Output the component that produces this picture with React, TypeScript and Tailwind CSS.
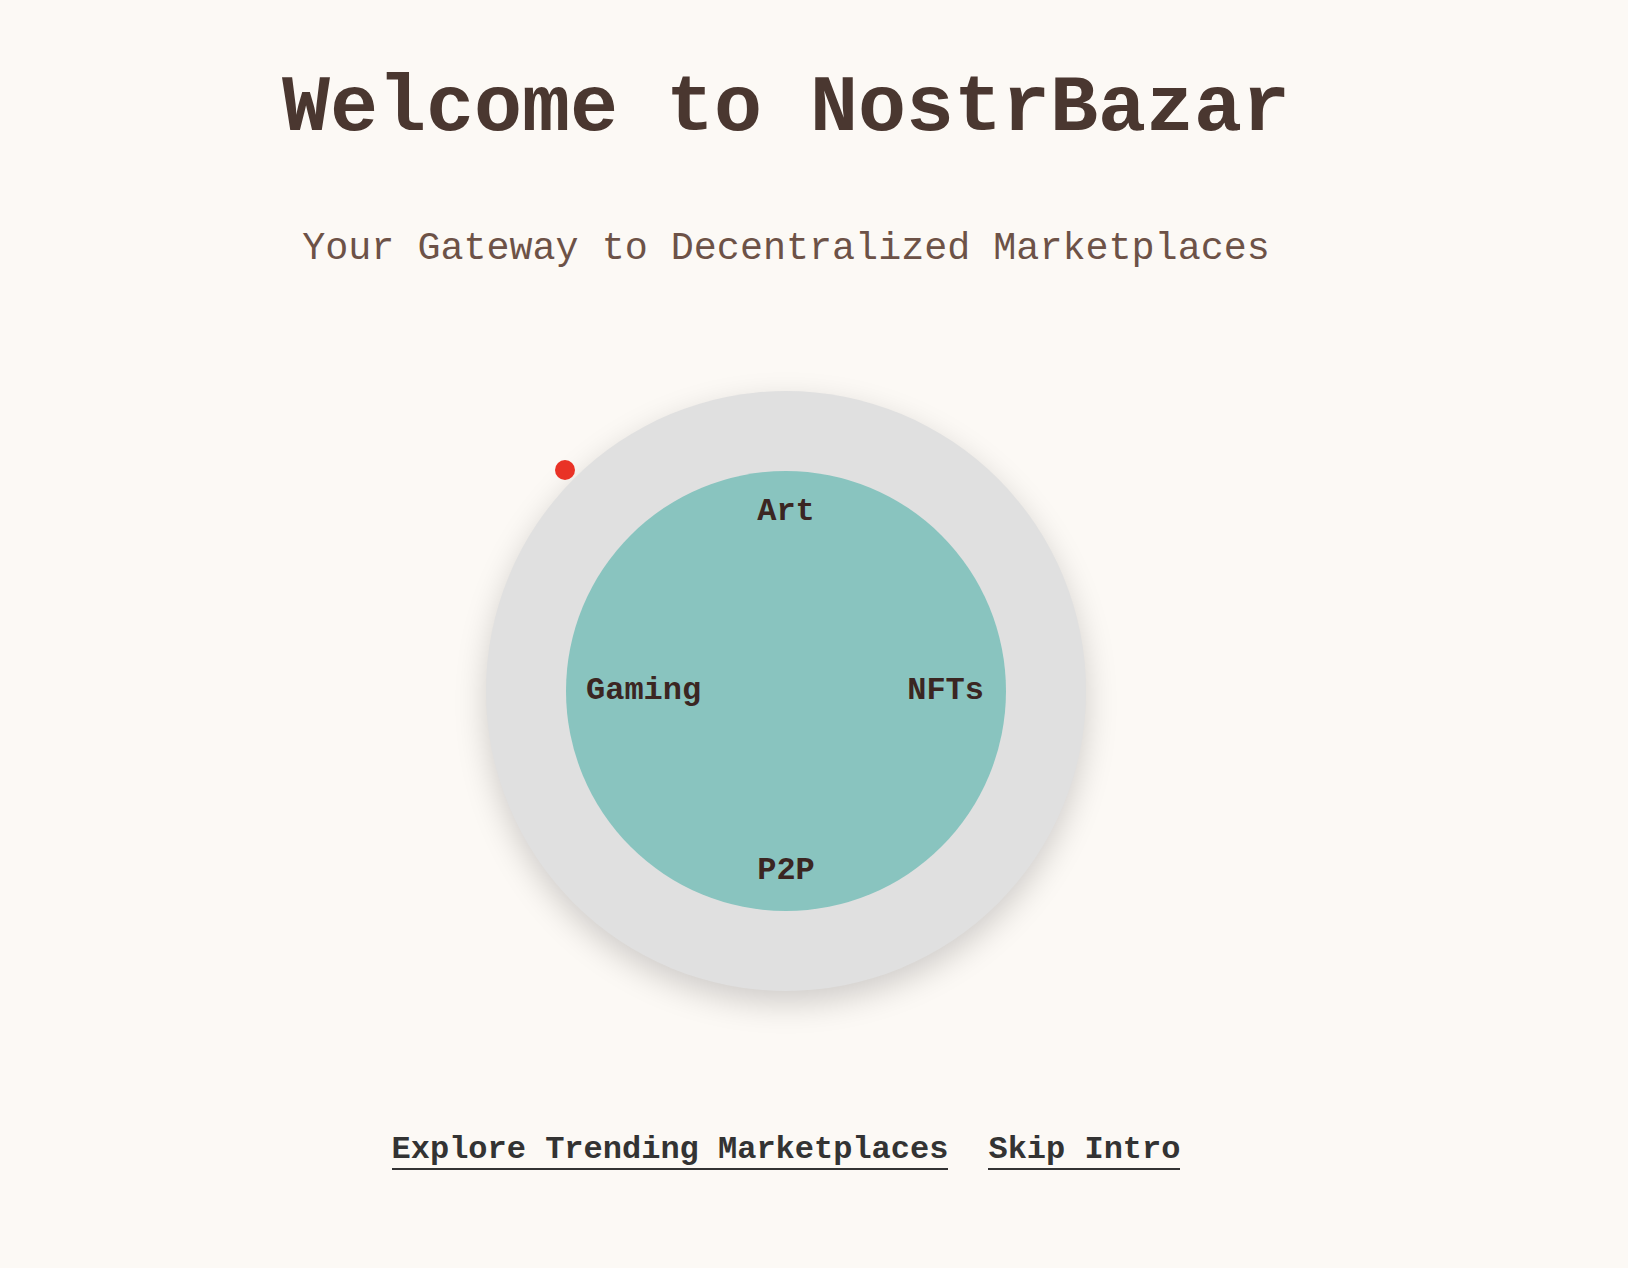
import React from "react";

const labels = [
  { text: "Art", cls: "top-[25px] left-1/2 -translate-x-1/2" },
  { text: "P2P", cls: "bottom-[24px] left-1/2 -translate-x-1/2" },
  { text: "Gaming", cls: "left-[20px] top-1/2 -translate-y-1/2" },
  { text: "NFTs", cls: "right-[22px] top-1/2 -translate-y-1/2" },
];

export default function App() {
  return (
    <div className="min-h-screen w-full bg-[#fcf9f5] font-['Liberation_Mono','Courier_New',monospace]">
      <div className="w-[1572px] flex flex-col items-center pt-[69px]">
        <h1 className="text-[80px] leading-none font-bold text-[#4a3730] whitespace-nowrap">
          Welcome to NostrBazar
        </h1>
        <p className="mt-[81px] text-[38.4px] leading-none text-[#6d5247] whitespace-nowrap">
          Your Gateway to Decentralized Marketplaces
        </p>

        {/* orbit */}
        <div className="relative mt-[123px] w-[600px] h-[600px] rounded-full bg-[#e0e0e0] shadow-[0_12px_32px_rgba(0,0,0,0.18)] flex items-center justify-center">
          <div className="relative w-[440px] h-[440px] rounded-full bg-[#89c4bf]">
            {labels.map((l) => (
              <span
                key={l.text}
                className={`absolute ${l.cls} text-[32px] leading-none font-bold text-[#3b2622]`}
              >
                {l.text}
              </span>
            ))}
          </div>
          <span className="absolute left-[69px] top-[69px] w-[20px] h-[20px] rounded-full bg-[#e93226]" />
        </div>

        <div className="mt-[143px] flex gap-[40px] text-[32px] leading-none font-bold text-[#333333]">
          <a href="#" className="pb-[2px] border-b-2 border-[#333333]">
            Explore Trending Marketplaces
          </a>
          <a href="#" className="pb-[2px] border-b-2 border-[#333333]">
            Skip Intro
          </a>
        </div>
      </div>
    </div>
  );
}
